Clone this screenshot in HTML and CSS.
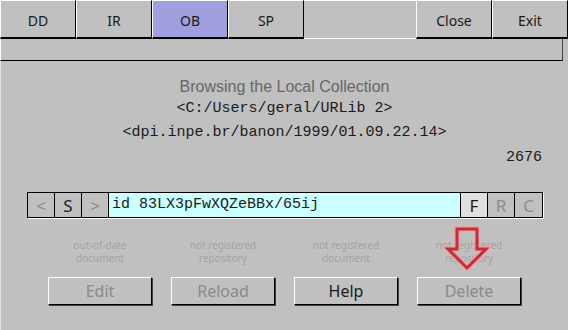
FILE: index.html
```html
<!DOCTYPE html>
<html>

<head>
  <title>Local Collection</title>
  <link rel="stylesheet" href="styles.css">
</head>

<body>
  <div class="tabs">
    <div class="tab">DD</div>
    <div class="tab">IR</div>
    <div class="tab active">OB</div>
    <div class="tab">SP</div>
    <div class="tab-space"></div>
    <div class="tab">Close</div>
    <div class="tab">Exit</div>
  </div>
  <div class="strip"></div>

  <div class="panel">
    <div class="title">Browsing the Local Collection</div>
    <div class="mono path">&lt;C:/Users/geral/URLib 2&gt;</div>
    <div class="mono path">&lt;dpi.inpe.br/banon/1999/01.09.22.14&gt;</div>
    <div class="mono count">2676</div>

    <div class="search">
      <div class="cell off">&lt;</div>
      <div class="cell">S</div>
      <div class="cell off">&gt;</div>
      <div class="field">id 83LX3pFwXQZeBBx/65ij</div>
      <div class="cell light">F</div>
      <div class="cell off">R</div>
      <div class="cell off">C</div>
    </div>

    <div class="actions">
      <div class="note">out-of-date<br>document</div>
      <div class="note">not registered<br>repository</div>
      <div class="note">not registered<br>document</div>
      <div class="note">not registered<br>repository</div>
      <button class="off">Edit</button>
      <button class="off">Reload</button>
      <button>Help</button>
      <button class="off">Delete</button>
    </div>

    <svg class="arrow" width="60" height="56" viewBox="0 0 60 56">
      <polygon points="17,4 37,4 37,24 46,24 27,43 8,24 17,24" fill="none" stroke="#f4a0a0" stroke-width="6" stroke-linejoin="miter" opacity="0.6"/>
      <polygon points="17,4 37,4 37,24 46,24 27,43 8,24 17,24" fill="none" stroke="#cc2a34" stroke-width="3" stroke-linejoin="miter"/>
    </svg>
  </div>
</body>

</html>
```

FILE: styles.css
```css
body {
  margin: 0;
  background-color: #c0c0c0;
  font-family: "Noto Sans", sans-serif;
  color: #1a1a1a;
  overflow: hidden;
}

.tabs {
  display: flex;
  height: 39px;
}

.tab {
  width: 76px;
  box-sizing: border-box;
  border-top: 1px solid #ffffff;
  border-left: 1px solid #ffffff;
  border-right: 1px solid #000000;
  border-bottom: 2px solid #000000;
  display: flex;
  align-items: center;
  justify-content: center;
  font-size: 14px;
  padding-top: 2px;
}

.tab.active {
  background-color: #a0a0e0;
}

.tab-space {
  flex: 1;
  border-top: 1px solid #ffffff;
  border-bottom: 1px solid #ffffff;
}

.strip {
  height: 21px;
  margin-right: 5px;
  border-left: 1px solid #ffffff;
  border-right: 1px solid #404040;
  border-bottom: 1px solid #000000;
}

.panel {
  position: relative;
  padding-top: 16px;
  height: 253px;
  border-left: 1px solid #e0e0e0;
}

.title {
  font-family: "Liberation Sans", Arial, sans-serif;
  font-size: 16px;
  line-height: 20px;
  color: #666666;
  text-align: center;
}

.mono {
  font-family: "Liberation Mono", "Courier New", monospace;
  font-size: 15px;
  color: #1a1a1a;
}

.path {
  text-align: center;
  line-height: 23px;
}

.path + .path {
  margin-top: 1px;
}

.count {
  text-align: right;
  padding-right: 26px;
  line-height: 22px;
  margin-top: 3px;
}

.search {
  display: flex;
  margin: 23px 0 0 26px;
  width: 516px;
  height: 26px;
  box-sizing: border-box;
  border: 1px solid #000000;
  box-shadow: 1px 1px 0 #ffffff;
}

.cell {
  width: 27px;
  box-sizing: border-box;
  border-right: 1px solid #000000;
  display: flex;
  align-items: center;
  justify-content: center;
  font-size: 17px;
}

.cell:last-child {
  border-right: none;
}

.cell.off {
  color: #8c8c8c;
}

.cell.light {
  background-color: #e0e0e0;
  border-left: 1px solid #000000;
  width: 28px;
}

.field {
  flex: 1;
  background-color: #ccffff;
  font-family: "Liberation Mono", "Courier New", monospace;
  font-size: 15px;
  line-height: 24px;
  padding-left: 3px;
}

.actions {
  display: grid;
  grid-template-columns: repeat(4, 104px);
  column-gap: 19px;
  margin: 21px 0 0 47px;
}

.note {
  font-size: 10px;
  line-height: 13px;
  color: #a4a4a4;
  text-align: center;
  margin-bottom: 12px;
}

button {
  height: 28px;
  background-color: #c0c0c0;
  border: 1px solid #ffffff;
  border-right-color: #000000;
  border-bottom-color: #000000;
  box-shadow: 1px 1px 0 #404040;
  font-family: "Noto Sans", sans-serif;
  font-size: 16px;
  color: #1a1a1a;
  padding: 0;
}

button.off {
  color: #8a8a8a;
}

.arrow {
  position: absolute;
  left: 439px;
  top: 164px;
}
```
